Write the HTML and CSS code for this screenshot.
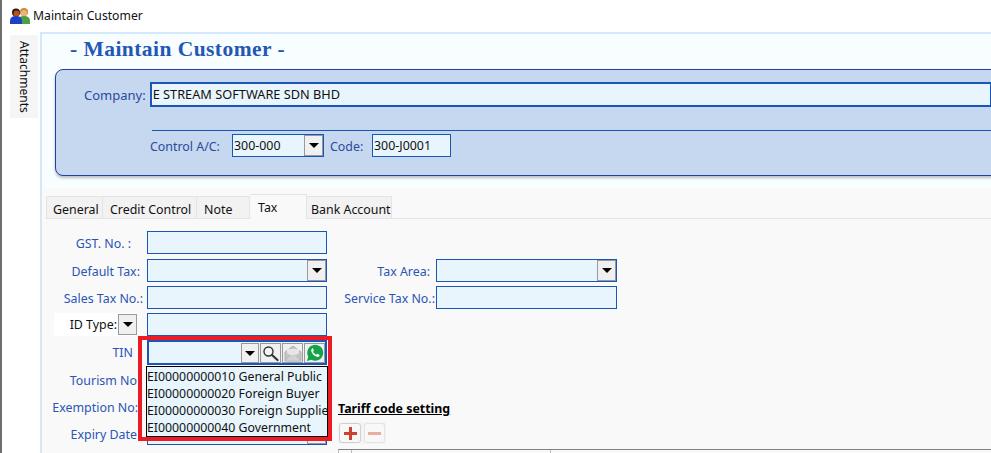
FILE: index.html
```html
<!DOCTYPE html>
<html lang="en">
<head>
  <meta charset="UTF-8">
  <meta name="viewport" content="width=device-width, initial-scale=1.0">
  <title>Maintain Customer</title>
  <link rel="stylesheet" href="styles.css">
</head>
<body>
  <div class="titlebar">
    <svg class="app-icon" width="20" height="18" viewBox="0 0 20 18">
      <circle cx="14" cy="5" r="4" fill="#c98a3e"/>
      <circle cx="14" cy="6" r="3" fill="#f0b27a"/>
      <path d="M8 17v-3c0-4 3-5 6-5s6 1 6 5v3z" fill="#4f9e45"/>
      <circle cx="6" cy="5.500" r="4" fill="#2a1a14"/>
      <circle cx="6.500" cy="6.500" r="3" fill="#b8501c"/>
      <path d="M0 17v-3c0-4 3-5 6-5s6 1 6 5v3z" fill="#1f3fc8"/>
    </svg>
    <span>Maintain Customer</span>
  </div>

  <div class="workarea">
    <div class="side-tab"><span>Attachments</span></div>

    <div class="main">
      <div class="head">
        <h1>- Maintain Customer -</h1>
        <div class="card">
          <div class="company-row">
            <label class="company-label">Company:</label>
            <div class="field field-company">E STREAM SOFTWARE SDN BHD</div>
          </div>
          <div class="card-line"></div>
          <div class="control-row">
            <label>Control A/C:</label>
            <div class="field field-control">
              300-000
              <span class="drop-btn"><i class="arrow"></i></span>
            </div>
            <label class="code-label">Code:</label>
            <div class="field field-code">300-J0001</div>
          </div>
        </div>
      </div>

      <div class="body-area">
        <!-- tabs -->
        <div class="tabs">
          <div class="tab tab-general">General</div>
          <div class="tab tab-credit">Credit Control</div>
          <div class="tab tab-note">Note</div>
          <div class="tab tab-active">Tax</div>
          <div class="tab tab-bank">Bank Account</div>
        </div>

        <div class="tab-page">
          <div class="form">
            <label class="pad-16">GST. No. :</label>
            <div class="field"></div>
            <div></div><div></div>

            <label class="pad-7">Default Tax:</label>
            <div class="field"><span class="drop-btn"><i class="arrow"></i></span></div>
            <label class="pad-6">Tax Area:</label>
            <div class="field"><span class="drop-btn"><i class="arrow"></i></span></div>

            <label class="pad-4">Sales Tax No.:</label>
            <div class="field"></div>
            <label class="pad-1">Service Tax No.:</label>
            <div class="field"></div>

            <div class="id-type">
              <span>ID Type:</span>
              <span class="id-btn"><i class="arrow"></i></span>
            </div>
            <div class="field"></div>
            <div></div><div></div>

            <label class="pad-14">TIN</label>
            <div class="field field-tin">
              <span class="tin-btn tin-arrow"><i class="arrow"></i></span>
              <span class="tin-btn">
                <svg width="17" height="17" viewBox="0 0 17 17">
                  <circle cx="6.500" cy="6.500" r="4.500" fill="#f4f6f6" stroke="#333" stroke-width="1.400"/>
                  <path d="M10 10l5.500 5" stroke="#333" stroke-width="2.200" stroke-linecap="round"/>
                </svg>
              </span>
              <span class="tin-btn">
                <svg width="18" height="17" viewBox="0 0 18 17">
                  <path d="M1 7l8-6 8 6v9H1z" fill="#c4c4c4" stroke="#b0b0b0"/>
                  <path d="M3 8V4h12v4l-6 4z" fill="#e6e6e6"/>
                  <path d="M1 16l6-6 2 1.500 2-1.500 6 6z" fill="#d2d2d2" stroke="#b5b5b5" stroke-width=".6"/>
                </svg>
              </span>
              <span class="tin-btn">
                <svg width="18" height="18" viewBox="0 0 18 18">
                  <path d="M1 17l1.200-4.400A8 8 0 1 1 5.400 15.800z" fill="#15a34a"/>
                  <path d="M6 4.800c-.6.5-1 1.300-.7 2.400.6 2.300 3 4.900 5.600 5.600 1.100.3 2-.1 2.500-.8.4-.6.3-1.100-.1-1.300l-1.700-.8c-.3-.1-.5 0-.7.2l-.6.7c-1.400-.5-2.600-1.600-3.200-3l.6-.7c.2-.2.2-.4.1-.7l-.7-1.600c-.2-.5-.8-.6-1.200-.3z" fill="#fff"/>
                </svg>
              </span>
            </div>
            <div></div><div></div>

            <label class="pad-10 low">Tourism No</label>
            <div></div>
            <div class="tariff">
              <div class="tariff-title">Tariff code setting</div>
              <div class="tariff-btns">
                <span class="tariff-btn"><i class="plus"></i></span>
                <span class="tariff-btn tariff-btn-off"><i class="minus"></i></span>
              </div>
              <div class="tariff-table">
                <span class="cell-first"></span>
                <span class="cell-second"></span>
              </div>
            </div>

            <label class="pad-9 low">Exemption No:</label>
            <div></div>

            <label class="pad-10 low">Expiry Date</label>
            <div class="field"><span class="drop-btn"></span></div>
          </div>
        </div>
      </div>
    </div>
  </div>

  <!-- red annotation box and the open TIN list sit over the form -->
  <div class="tin-list">
    <div>EI00000000010 General Public</div>
    <div>EI00000000020 Foreign Buyer</div>
    <div>EI00000000030 Foreign Supplie</div>
    <div>EI00000000040 Government</div>
  </div>
  <div class="red-box"></div>
</body>
</html>
```

FILE: styles.css
```css
* {
  box-sizing: border-box;
}

html, body {
  height: 100%;
}

body {
  margin: 0;
  overflow: hidden;
  position: relative;
  background-color: #fff;
  border-left: 2px solid #6e6e6e;
  font-family: "Noto Sans", "Open Sans", sans-serif;
  font-size: 12.4px;
  color: #111;
}

.titlebar {
  height: 31px;
  display: flex;
  align-items: center;
  gap: 3px;
  padding-left: 8px;
  font-size: 12.2px;
  background-color: #fff;
}

.workarea {
  display: flex;
  height: 422px;
}

.side-tab {
  width: 28px;
  height: 83px;
  margin: 4px 0 0 8px;
  font-size: 12px;
  background-color: #f5f5f5;
  display: flex;
  align-items: center;
  justify-content: center;
}

.side-tab span {
  writing-mode: vertical-rl;
}

.main {
  flex: 1;
  min-width: 0;
  margin: 1px 0 0 2px;
  display: flex;
  flex-direction: column;
  border-left: 2px solid #d3e8fb;
}

.head {
  height: 156px;
  padding: 0 0 0 13px;
  border-top: 2px solid #d3e8fb;
  background-color: #f8fdff;
}

.head h1 {
  margin: 3px 0 0 15px;
  height: 32px;
  font-family: "Liberation Serif", serif;
  font-size: 21.5px;
  font-weight: bold;
  letter-spacing: 0.45px;
  color: #2257b5;
}

.card {
  height: 107px;
  margin-right: -2px;
  padding: 12px 0 0 28px;
  background-color: #c6d7f0;
  border: 1px solid #23409f;
  border-radius: 8px 0 0 8px;
  box-shadow: 0 2px 3px rgba(0, 0, 0, 0.25);
  color: #2a4a9c;
}

.field {
  position: relative;
  height: 23px;
  line-height: 19px;
  padding-left: 1px;
  background-color: #e8f5fc;
  border: 1px solid #1a56b8;
  color: #111;
}

.company-row {
  display: flex;
  align-items: center;
  gap: 4px;
}

.company-label {
  font-size: 13px;
}

.field-company {
  flex: 1;
  height: 25px;
  line-height: 21px;
  padding-left: 1px;
  border-width: 2px;
  font-size: 12.75px;
}

.card-line {
  height: 1px;
  margin: 23px 0 0 68px;
  background-color: #1a56b8;
}

.control-row {
  display: flex;
  align-items: center;
  height: 23px;
  margin: 3px 0 0 66px;
}

.control-row label {
  width: 82px;
  padding-top: 2px;
}

.control-row .code-label {
  width: 42px;
  margin-left: 6px;
}

.field-control {
  width: 92px;
  line-height: 21px;
}

.field-code {
  width: 79px;
  line-height: 21px;
}

.drop-btn {
  position: absolute;
  top: 0;
  right: 0;
  width: 19px;
  height: 21px;
  display: flex;
  align-items: center;
  justify-content: center;
  background-color: #f0f0f0;
  border: 1px solid #999;
}

.arrow {
  width: 0;
  height: 0;
  border-left: 5px solid transparent;
  border-right: 5px solid transparent;
  border-top: 5px solid #000;
}

.body-area {
  flex: 1;
  background-color: #f9f9f9;
  padding: 7px 0 0 4px;
  min-height: 0;
}

.tabs {
  display: flex;
  align-items: flex-end;
  height: 24px;
  border-bottom: 1px solid #e4e4e4;
}

.tab {
  height: 22px;
  line-height: 25px;
  padding-left: 7px;
  white-space: nowrap;
  background-color: #f2f2f2;
  border: 1px solid #e4e4e4;
  border-bottom: 0;
  border-left: 0;
}

.tab-general {
  width: 57px;
  padding-left: 6px;
  border-left: 1px solid #e4e4e4;
}

.tab-credit {
  width: 94px;
}

.tab-note {
  width: 53px;
}

.tab-active {
  width: 57px;
  height: 25px;
  margin-bottom: -1px;
  padding-left: 8px;
  line-height: 26px;
  background-color: #f9f9f9;
}

.tab-bank {
  width: 85px;
  padding-left: 4px;
}

.tab-page {
  padding: 12px 0 0 2px;
}

.form {
  display: grid;
  grid-template-columns: 99px 180px 109px 181px;
  grid-template-rows: 24px 23px 23px 23px 24px;
  grid-auto-rows: 23px;
  row-gap: 4px;
  color: #2a55b5;
}

.form > label {
  text-align: right;
  line-height: 25px;
  white-space: nowrap;
}

.form > .low {
  line-height: 26px;
}

.form > .field {
  height: 23px;
}

.form > .field-tin {
  height: 25px;
}

.pad-1 { padding-right: 1px; }
.pad-4 { padding-right: 4px; }
.pad-6 { padding-right: 6px; }
.pad-7 { padding-right: 7px; }
.pad-9 { padding-right: 9px; }
.pad-10 { padding-right: 10px; }
.pad-14 { padding-right: 14px; }
.pad-16 { padding-right: 16px; }

.id-type {
  margin: 0 10px 0 6px;
  display: flex;
  align-items: center;
  justify-content: flex-end;
  gap: 1px;
  background-color: #fff;
  color: #111;
}

.id-btn {
  width: 19px;
  height: 21px;
  display: flex;
  align-items: center;
  justify-content: center;
  background-color: #f0f0f0;
  border: 1px solid #999;
}

.field-tin {
  padding: 1px 0 0 0;
  border-width: 2px;
  display: flex;
  justify-content: flex-end;
  gap: 1px;
}

.tin-btn {
  width: 21px;
  height: 20px;
  display: flex;
  align-items: center;
  justify-content: center;
  background-color: #f0f0f0;
  border: 1px solid #999;
}

.tin-arrow {
  width: 18px;
}

.tariff {
  grid-column: 3 / 5;
  grid-row: span 3;
  padding-top: 32px;
  margin: 0 -400px 0 11px;
  color: #000;
}

.tariff-title {
  font-weight: bold;
  text-decoration: underline;
  line-height: 17px;
}

.tariff-btns {
  display: flex;
  width: 48px;
  gap: 3px;
  margin-top: 5px;
  padding: 1px;
  background-color: #f3f3f3;
}

.tariff-btn {
  width: 22px;
  height: 20px;
  display: flex;
  align-items: center;
  justify-content: center;
  background-color: #f8f8f8;
  border: 1px solid #cfcfcf;
  border-radius: 3px;
}

.tariff-btn-off {
  width: 21px;
  border-color: #e4e4e4;
}

.plus {
  width: 13px;
  height: 13px;
  background:
    linear-gradient(#c9432f, #c9432f) center / 13px 3px no-repeat,
    linear-gradient(#c9432f, #c9432f) center / 3px 13px no-repeat;
}

.minus {
  width: 13px;
  height: 3px;
  background-color: #e9ada2;
}

.tariff-table {
  display: flex;
  height: 20px;
  margin-top: 5px;
  border-top: 1px solid #808080;
  border-left: 1px solid #bbb;
}

.tariff-table span {
  display: block;
  height: 100%;
  border-right: 1px solid #bbb;
}

.cell-first {
  width: 13px;
}

.cell-second {
  width: 199px;
}

.tin-list {
  position: absolute;
  left: 144px;
  top: 366px;
  width: 182px;
  height: 71px;
  padding-top: 1px;
  overflow: hidden;
  background-color: #e8f5fc;
  border: 1px solid #000;
  font-size: 12.3px;
  line-height: 17px;
  white-space: nowrap;
  color: #111;
}

.red-box {
  position: absolute;
  left: 136px;
  top: 336px;
  width: 194px;
  height: 105px;
  border: 4px solid #ed1c24;
}
```
